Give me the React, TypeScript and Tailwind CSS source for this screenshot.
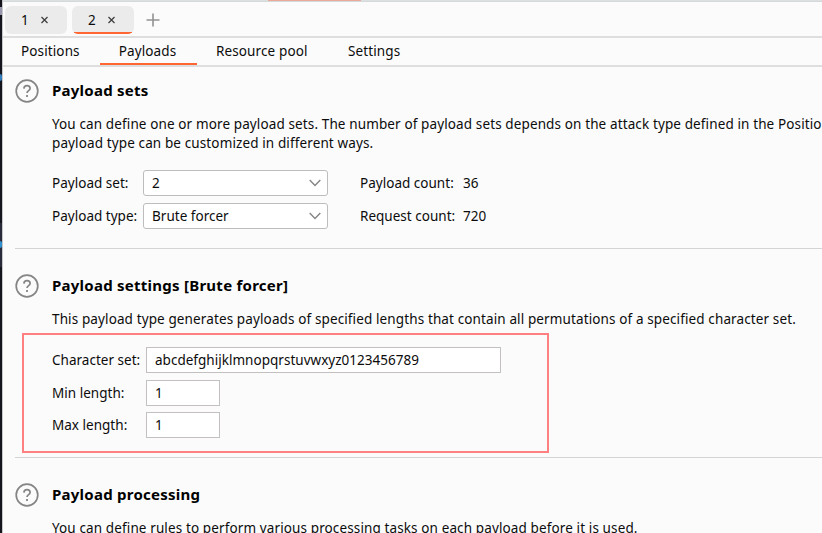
import type { ReactNode } from "react";

function HelpIcon() {
  return (
    <svg width="24" height="24" viewBox="0 0 24 24" fill="none" stroke="#858585" className="shrink-0">
      <circle cx="12" cy="12" r="10.8" strokeWidth="1.7" />
      <path d="M8.9 9.6c.1-1.7 1.3-2.9 3.1-2.9 1.8 0 3.1 1.1 3.1 2.7 0 2.2-3.1 2.3-3.1 4.6" strokeWidth="1.7" />
      <path d="M12 16.1v1.9" strokeWidth="1.8" />
    </svg>
  );
}

function Cross() {
  return (
    <svg width="7" height="8" viewBox="0 0 7 8" stroke="#3c3c3c" strokeWidth="1.2">
      <path d="M.5 1l6 6M6.5 1l-6 6" />
    </svg>
  );
}

function Tab({ label, active }: { label: string; active?: boolean }) {
  return (
    <div className="relative flex h-[28px] w-[62px] items-center gap-[12px] overflow-hidden rounded-[6px] bg-[#ebebeb] pl-[16px]">
      <span className="w-[8px]">{label}</span>
      <Cross />
      {active && <div className="absolute inset-x-[2px] bottom-0 h-[2px] bg-[#ff6633]" />}
    </div>
  );
}

function Title({ children }: { children: ReactNode }) {
  return (
    <div className="flex h-6 items-center gap-[13px]">
      <HelpIcon />
      <h2 className="whitespace-nowrap pb-[2px] text-[15px] font-bold tracking-[0.25px] text-black">{children}</h2>
    </div>
  );
}

function Select({ value }: { value: string }) {
  return (
    <div className="flex h-[26px] w-[185px] items-center justify-between rounded-[3px] border border-[#bdbdbd] bg-white pl-2 pr-[6px]">
      <span>{value}</span>
      <svg width="12" height="8" viewBox="0 0 12 8" fill="none" stroke="#858585" strokeWidth="1.4">
        <path d="M.7 1L6 6.5 11.3 1" />
      </svg>
    </div>
  );
}

function Field({ label, value, wide }: { label: string; value: string; wide?: boolean }) {
  return (
    <div className="flex h-[26px] items-center">
      <span className="w-[94px] shrink-0">{label}</span>
      <div className={`flex h-[26px] items-center border border-[#c4c0c1] bg-white pl-2 ${wide ? "w-[355px]" : "w-[74px]"}`}>
        {value}
      </div>
    </div>
  );
}

export default function App() {
  return (
    <div className="flex h-[533px] w-[822px] overflow-hidden bg-[#fbfbfb] font-['Noto_Sans',sans-serif] text-[13.5px] leading-[18px] tracking-[0.02px] text-[#0c0c0c]">
      <aside className="flex w-[3px] shrink-0 flex-col border-r border-[#c7c7cb] bg-[#15151d]">
        <div className="mt-[7px] h-[8px] bg-[#9796ac]" />
        <div className="mt-[59px] h-[7px] rounded-r bg-[#327dbc]" />
        <div className="mt-[142px] h-[44px] bg-[#292b3a]">
          <div className="mt-[18px] h-[7px] rounded-r bg-[#3191d0]" />
        </div>
      </aside>
      <main className="flex min-w-0 flex-1 flex-col whitespace-nowrap">
        <div className="h-[2px] shrink-0 border-b border-[#d5d9d9] bg-[#dce0e0]">
          <div className="ml-[265px] h-px w-[93px] bg-[#e9aa99]" />
        </div>
        <div className="flex h-[36px] shrink-0 gap-[5px] border-b-2 border-[#dedede] pl-[2px] pt-[4px]">
          <Tab label="1" />
          <Tab label="2" active />
          <svg width="14" height="14" viewBox="0 0 14 14" stroke="#929292" strokeWidth="1.6" className="ml-[7px] mt-[7px]">
            <path d="M7 .5v13M.5 7h13" />
          </svg>
        </div>
        <nav className="flex h-[29px] shrink-0 items-center border-b-2 border-[#dedede] tracking-[0.12px]">
          <span className="w-[97px] pb-[2px] pl-[18px]">Positions</span>
          <span className="relative flex h-[27px] w-[97px] items-center justify-center pb-[2px] pr-[2px]">
            Payloads
            <i className="absolute inset-x-0 bottom-0 h-[2px] bg-[#ff6633]" />
          </span>
          <span className="w-[132px] pb-[2px] pl-[19px]">Resource pool</span>
          <span className="pb-[2px] pl-[19px]">Settings</span>
        </nav>
        <section className="ml-[12px] h-[182px] shrink-0 border-b border-[#d4d4d4] pt-[12px]">
          <Title>Payload sets</Title>
          <div className="pl-[37px]">
            <p className="mt-[12px] leading-[19px] tracking-[0.12px]">
              You can define one or more payload sets. The number of payload sets depends on the attack type defined in the Positions
              <br />
              payload type can be customized in different ways.
            </p>
            <div className="mt-[17px] grid grid-cols-[91px_217px_103px_auto] items-center gap-y-[7px]">
              <span>Payload set:</span>
              <Select value="2" />
              <span>Payload count:</span>
              <span>36</span>
              <span>Payload type:</span>
              <Select value="Brute forcer" />
              <span>Request count:</span>
              <span>720</span>
            </div>
          </div>
        </section>
        <section className="ml-[12px] h-[209px] shrink-0 border-b border-[#d4d4d4] pt-[25px]">
          <Title>Payload settings [Brute forcer]</Title>
          <p className="mt-[12px] pl-[37px] tracking-[0.12px]">
            This payload type generates payloads of specified lengths that contain all permutations of a specified character set.
          </p>
          <div className="ml-[7px] mt-[5px] flex h-[120px] w-[527px] flex-col gap-[6.5px] border-2 border-[#ff8080] pl-[28px] pt-[12px]">
            <Field label="Character set:" value="abcdefghijklmnopqrstuvwxyz0123456789" wide />
            <Field label="Min length:" value="1" />
            <Field label="Max length:" value="1" />
          </div>
        </section>
        <section className="ml-[12px] shrink-0 pt-[25px]">
          <Title>Payload processing</Title>
          <p className="mt-[12px] pl-[37px] tracking-[0.12px]">
            You can define rules to perform various processing tasks on each payload before it is used.
          </p>
        </section>
      </main>
    </div>
  );
}
